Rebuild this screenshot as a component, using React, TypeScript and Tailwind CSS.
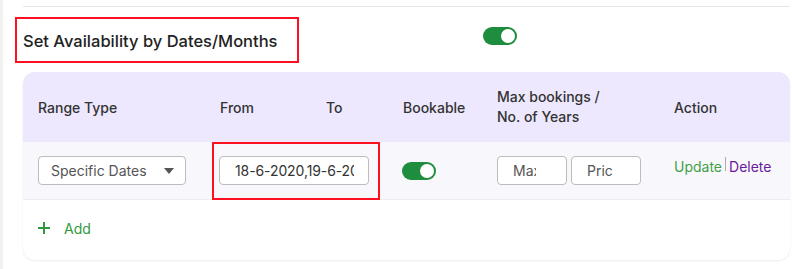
import React from "react";

function Toggle() {
  return (
    <div className="w-[34px] h-[18px] rounded-full bg-[#1e8e3e] flex items-center justify-end pr-[2px]">
      <div className="w-[14px] h-[14px] rounded-full bg-white" />
    </div>
  );
}

export default function App() {
  return (
    <div className="w-[792px] h-[269px] bg-white flex font-['Inter',sans-serif] text-[#2b2b2b] overflow-hidden">
      <div className="w-[3px] bg-[#f1f1f1] shrink-0" />
      <div className="flex-1 pl-[20px] pr-[2px] flex flex-col">
        <div className="mt-[6px] border-t border-[#e6e6e6]" />
        <div className="relative h-[65px] flex items-center">
          <div className="absolute left-[-8px] top-[10px] w-[284px] h-[46px] border-2 border-[#ff1020]" />
          <div className="w-[460px] text-[16.5px] font-medium leading-none mt-[4px] text-[#222]">
            Set Availability by Dates/Months
          </div>
          <div className="-mt-[8px]">
            <Toggle />
          </div>
        </div>
        <div className="rounded-[12px] bg-white shadow-[0_1px_2px_rgba(0,0,0,0.08)] flex flex-col">
          <div className="h-[70px] bg-[#ede8fd] rounded-t-[12px] flex items-center pl-[15px] text-[14px] font-medium text-[#333]">
            <div className="w-[182px]">Range Type</div>
            <div className="w-[106px]">From</div>
            <div className="w-[77px]">To</div>
            <div className="w-[94px]">Bookable</div>
            <div className="w-[177px] leading-[20px]">
              Max bookings /<br />No. of Years
            </div>
            <div>Action</div>
          </div>
          <div className="relative h-[58px] bg-[#f7f7fc] border-b border-[#ececf2] flex items-center pl-[15px] text-[14px] text-[#444]">
            <div className="absolute left-[189px] top-0 w-[168px] h-[58px] border-2 border-[#ff1020]" />
            <div className="w-[181px]">
              <div className="w-[148px] h-[29px] border border-[#bdbdbd] rounded-[4px] bg-white flex items-center justify-between pl-[12px] pr-[11px] text-[#555]">
                <span>Specific Dates</span>
                <svg width="10" height="6" viewBox="0 0 10 6">
                  <path d="M0 0 L10 0 L5 6 Z" fill="#555" />
                </svg>
              </div>
            </div>
            <div className="w-[183px] relative">
              <div className="w-[150px] h-[29px] border border-[#bdbdbd] rounded-[4px] bg-white flex items-center pl-[15px] overflow-hidden whitespace-nowrap text-[#333]">
                <span className="block w-[119px] overflow-hidden tracking-[-0.1px]">18-6-2020,19-6-20</span>
              </div>
            </div>
            <div className="w-[95px]">
              <Toggle />
            </div>
            <div className="w-[177px] flex gap-[4px]">
              <div className="w-[70px] h-[29px] border border-[#bdbdbd] rounded-[4px] bg-white flex items-center pl-[15px] text-[#555]">
                <span className="block w-[23px] overflow-hidden whitespace-nowrap">Max</span>
              </div>
              <div className="w-[70px] h-[29px] border border-[#bdbdbd] rounded-[4px] bg-white flex items-center pl-[15px] text-[#555]">
                <span className="block w-[26px] overflow-hidden whitespace-nowrap">Pric</span>
              </div>
            </div>
            <div className="flex items-center self-start mt-[14px] text-[14px]">
              <span className="text-[#43a047]">Update</span>
              <span className="mx-[3px] w-px h-[14px] bg-[#aaa] -mt-[5px]" />
              <span className="text-[#6a1b9a]">Delete</span>
            </div>
          </div>
          <div className="h-[60px] flex items-center pl-[15px] pb-[4px] text-[14px] text-[#2e9a3e]">
            <svg width="12" height="12" viewBox="0 0 12 12" className="mr-[14px]">
              <path d="M6 0 V12 M0 6 H12" stroke="#2e9a3e" strokeWidth="2" />
            </svg>
            <span>Add</span>
          </div>
        </div>
      </div>
    </div>
  );
}
